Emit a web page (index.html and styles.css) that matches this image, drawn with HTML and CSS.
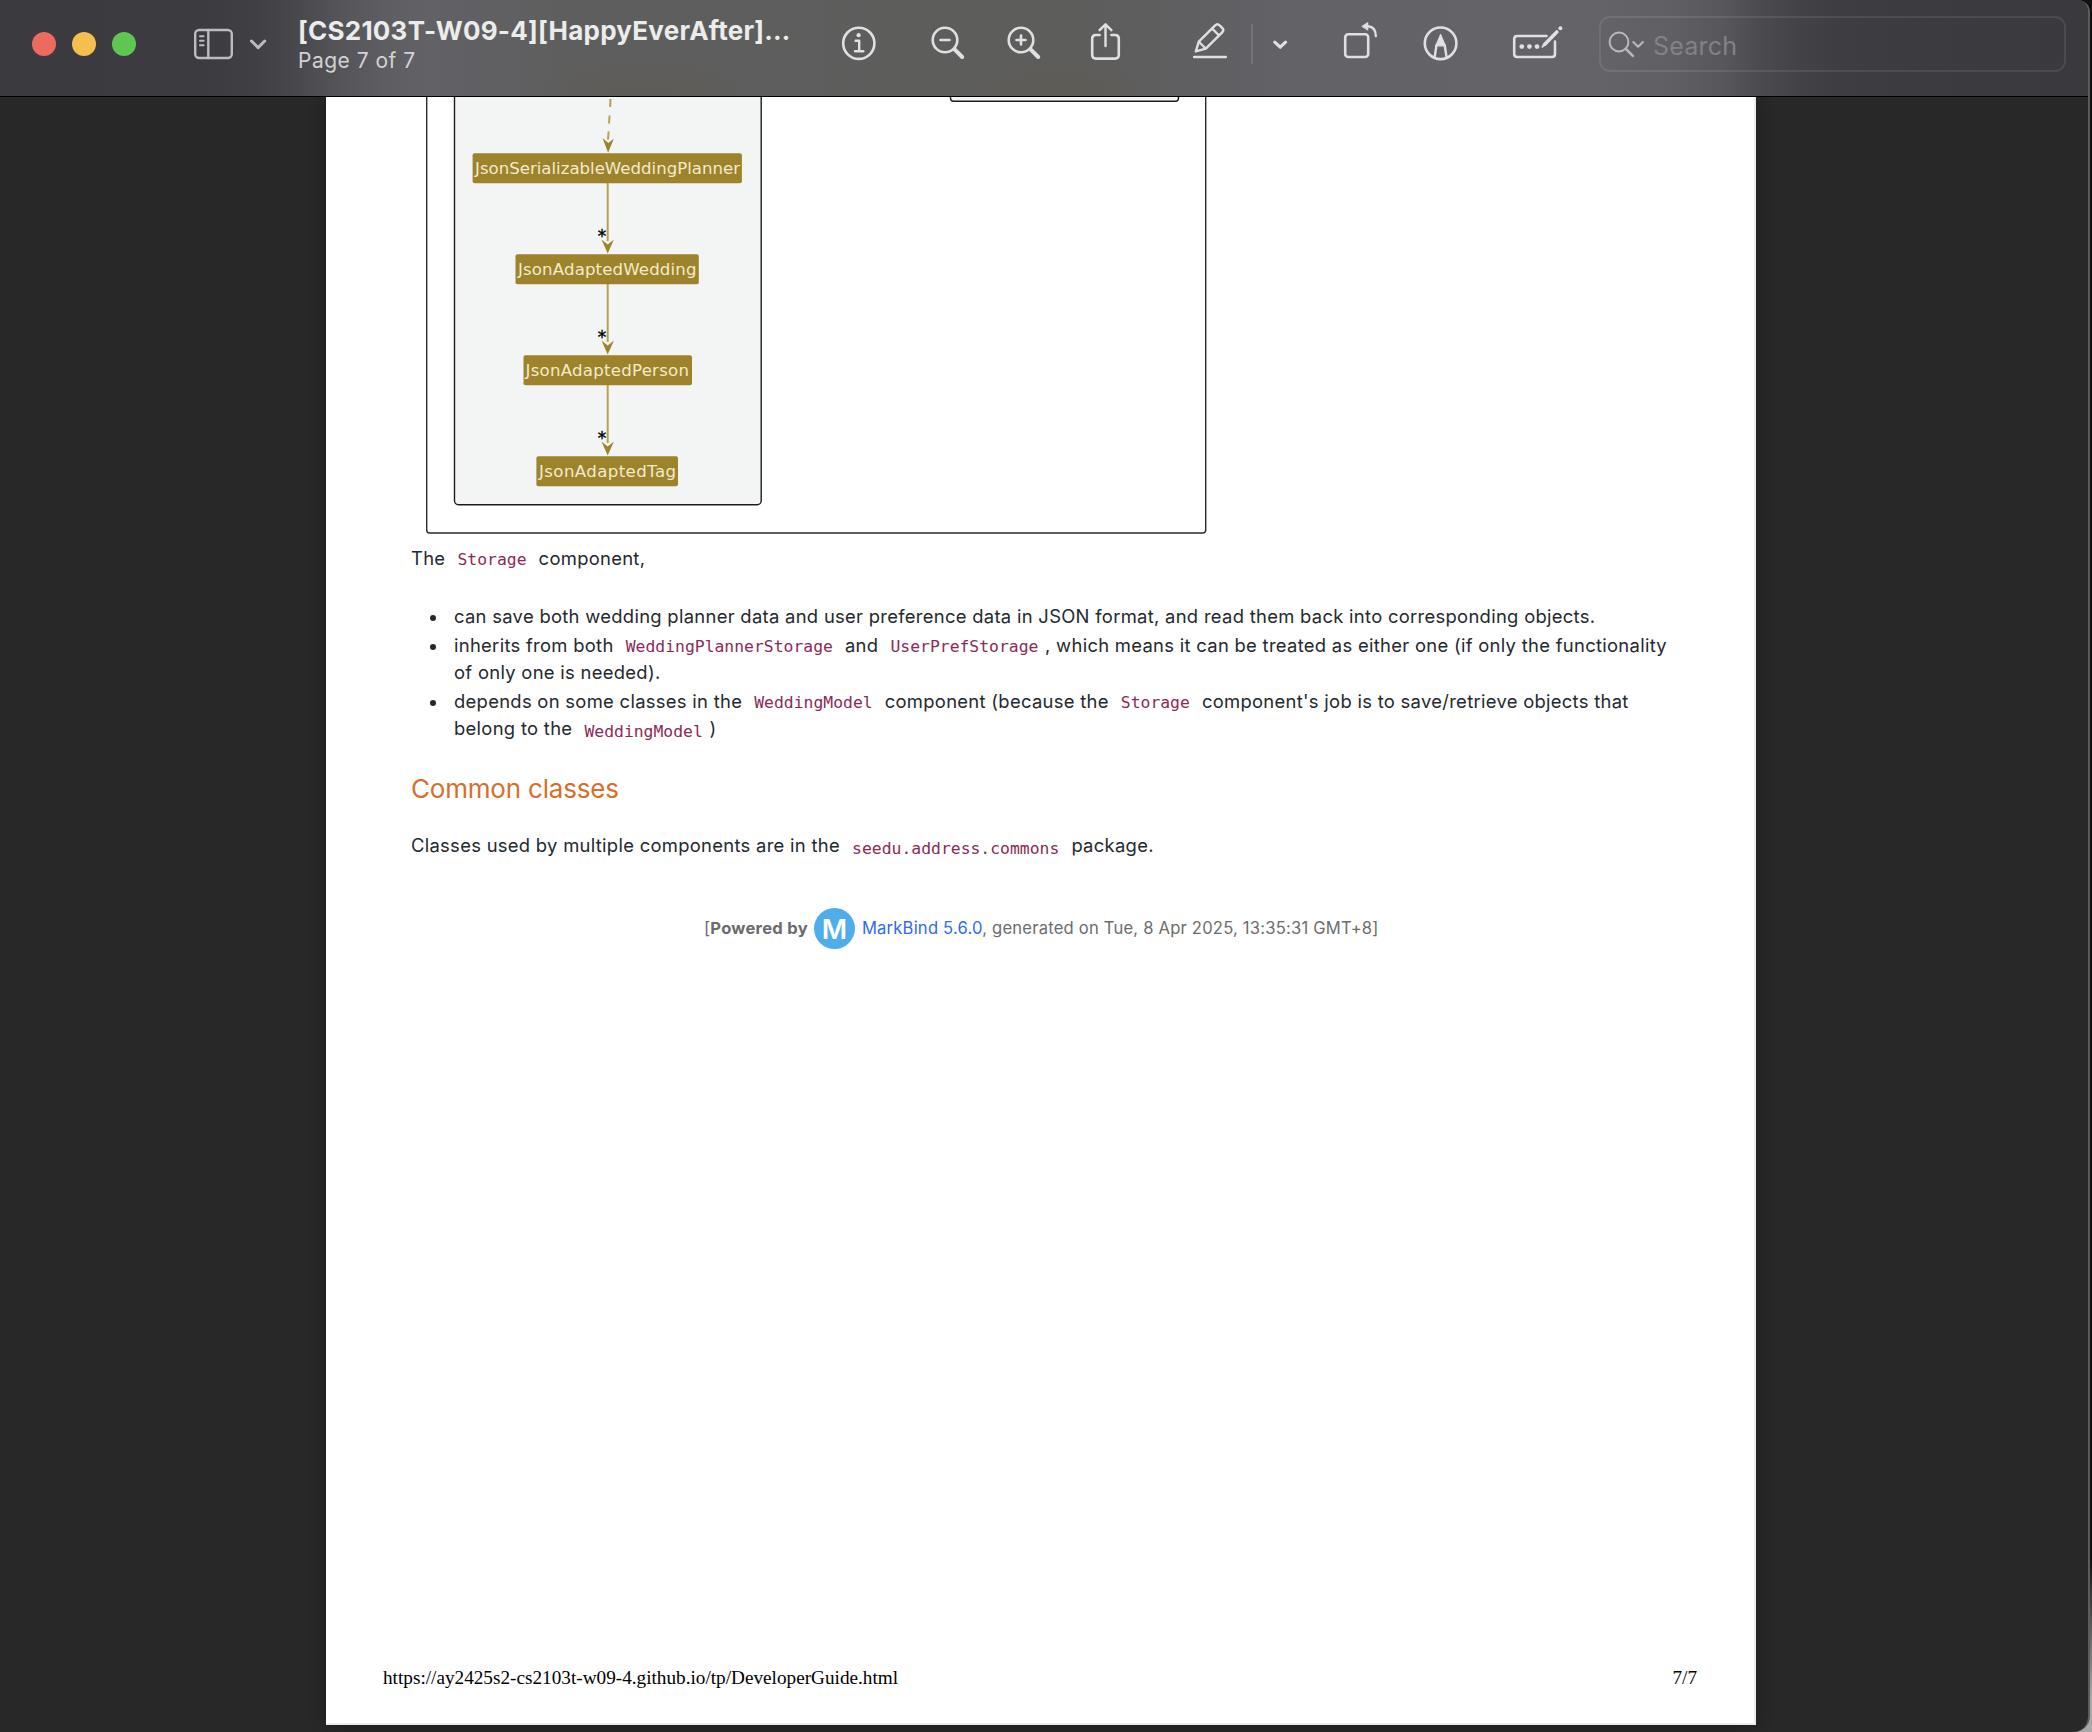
FILE: index.html
```html
<!DOCTYPE html>
<html lang="en">
<head>
<meta charset="utf-8">
<title>Developer Guide</title>
<link rel="stylesheet" href="styles.css">
</head>
<body>
<div class="window">
  <header class="toolbar">
    <div class="lights"><i class="light red"></i><i class="light yellow"></i><i class="light green"></i></div>
    <svg class="sidebar-icon" width="76" height="40" viewBox="192 24 76 40">
      <g fill="none" stroke="#bcbcc0" stroke-width="2.4" stroke-linecap="round" stroke-linejoin="round">
        <rect x="195.2" y="30" width="36.6" height="28" rx="4"/>
        <path d="M208.3 30v28"/>
        <path d="M200 36.3h3.6M200 40.8h3.6M200 45.3h3.6" stroke-width="2"/>
        <path d="M251.5 41l6.6 6.6 6.6-6.6" stroke-width="3"/>
      </g>
    </svg>
    <div class="title">
      <div class="name">[CS2103T-W09-4][HappyEverAfter]…</div>
      <div class="sub">Page 7 of 7</div>
    </div>
    <svg class="tools" width="740" height="60" viewBox="836 14 740 60">
      <g fill="none" stroke="#e0e0e2" stroke-width="2.6" stroke-linecap="round" stroke-linejoin="round">
        <circle cx="858.8" cy="43.3" r="15.6"/>
        <path d="M855.6 40.8h3.6v10.4M855 51.3h8.4" stroke-width="2.4"/>
        <circle cx="858.6" cy="35.2" r="2.1" fill="#e0e0e2" stroke="none"/>

        <circle cx="945" cy="40" r="12.3"/>
        <path d="M940.5 40h9"/>
        <path d="M954.6 49.4l7.6 7.6" stroke-width="4"/>

        <circle cx="1021" cy="40" r="12.3"/>
        <path d="M1016.5 40h9M1021 35.5v9"/>
        <path d="M1030.6 49.4l7.6 7.6" stroke-width="4"/>

        <path d="M1099.6 35h-3.6q-3.8 0-3.8 3.8v16q0 3.8 3.8 3.8h19q3.8 0 3.8-3.8v-16q0-3.8-3.8-3.8h-3.6"/>
        <path d="M1105.5 46V25M1099.6 30.2l5.900-5.900 5.900 5.900" stroke-width="2.4"/>

        <path d="M1195.800 51.400l3-9.700 16.400-16.400q2.200-2.200 4.400 0l2.600 2.600q2.200 2.200 0 4.400l-16.400 16.400-10 2.700z" stroke-width="2.400"/>
        <path d="M1212.200 28.600l6.800 6.800M1199.400 42.200l6 6" stroke-width="2.200"/>
        <path d="M1194.200 57h31.600" stroke-width="2.600"/>
        <path d="M1252 24.500v39" stroke="#77777b" stroke-width="1.800"/>
        <path d="M1274.800 42.200l5.400 5 5.400-5" stroke-width="3.200"/>

        <rect x="1345.200" y="34.200" width="23" height="22.800" rx="3"/>
        <path d="M1362.200 26.200l5.600-3.600v7.200z" fill="#e0e0e2" stroke-width="1"/>
        <path d="M1368 26.200q7.800.6 7.800 9.800" stroke-width="2.400"/>

        <circle cx="1440.600" cy="43.300" r="15.800"/>
        <path d="M1434.600 57.500l1.900-12.300M1446.600 57.500l-1.900-12.300" stroke-width="2.400"/>
        <path d="M1440.600 34.600l4.700 11.200h-9.400z" fill="#e0e0e2" stroke-width="1.200"/>

        <path d="M1546.500 36h-29.300q-3 0-3 3v15q0 3 3 3h34.800q3 0 3-3v-12.500"/>
        <g fill="#e0e0e2" stroke="none"><circle cx="1521.800" cy="46.600" r="2.400"/><circle cx="1529.400" cy="46.600" r="2.400"/><circle cx="1537" cy="46.600" r="2.400"/><circle cx="1560.400" cy="28.200" r="2"/></g>
        <path d="M1544.600 44.400L1556.800 32" stroke-width="3.600"/>
        <path d="M1542.400 46.900l2-3" stroke-width="1.800"/>
      </g>
    </svg>
    <div class="search">
      <svg width="54" height="30" viewBox="1600 28 54 30">
        <g fill="none" stroke="#b9b9bb" stroke-width="2" stroke-linecap="round" stroke-linejoin="round">
          <circle cx="1618" cy="42" r="9.400"/>
          <path d="M1624.800 48.800l7 7" stroke-width="2.600"/>
          <path d="M1632.300 42l4.800 4.800 4.800-4.800"/>
        </g>
      </svg>
      <span>Search</span>
    </div>
  </header>

  <main class="page">
    <svg class="diagram" width="1430" height="448" viewBox="326 97 1430 448">
      <rect x="426.700" y="0" width="779" height="533" rx="3" fill="none" stroke="#2a2a2a" stroke-width="1.400"/>
      <rect x="454.500" y="0" width="306.700" height="504.800" rx="4" fill="#f3f5f5" stroke="#1c1c1c" stroke-width="1.400"/>
      <rect x="950.500" y="60" width="228" height="41.300" rx="3" fill="#f3f5f5" stroke="#1c1c1c" stroke-width="1.400"/>
      <g stroke="#b5a152" stroke-width="2" fill="none">
        <path d="M610.500 99l-.4 8M609.600 115.500l-.6 8M608.600 131.500l-.6 8"/>
        <path d="M607.700 183v58M607.700 284v58M607.700 385v58"/>
      </g>
      <g fill="#9d832b">
        <path d="M602.500 138l5.800 5 5.500-4.200-5.700 14z"/>
        <path d="M601.500 239.500l6.200 5 6.200-5-6.200 14z"/>
        <path d="M601.500 340.500l6.200 5 6.200-5-6.200 14z"/>
        <path d="M601.500 441.500l6.200 5 6.200-5-6.200 14z"/>
        <rect x="472.600" y="153.300" width="269.300" height="30" rx="2"/>
        <rect x="515.500" y="254.200" width="183.300" height="30" rx="2"/>
        <rect x="523.500" y="355.200" width="168.500" height="30" rx="2"/>
        <rect x="536.400" y="456.200" width="141.600" height="30" rx="2"/>
      </g>
      <g class="node">
        <text x="475" y="174" textLength="265">JsonSerializableWeddingPlanner</text>
        <text x="518" y="275" textLength="178.500">JsonAdaptedWedding</text>
        <text x="525.500" y="375.500" textLength="163.500">JsonAdaptedPerson</text>
        <text x="539" y="476.500" textLength="137">JsonAdaptedTag</text>
      </g>
      <g class="mult"><text x="602" y="241.500">*</text><text x="602" y="342.500">*</text><text x="602" y="443.500">*</text></g>
    </svg>

    <article class="content">
      <p>The <code>Storage</code> component,</p>
      <ul>
        <li>can save both wedding planner data and user preference data in JSON format, and read them back into corresponding objects.</li>
        <li>inherits from both <code>WeddingPlannerStorage</code> and <code>UserPrefStorage</code>, which means it can be treated as either one (if only the functionality<br>of only one is needed).</li>
        <li>depends on some classes in the <code>WeddingModel</code> component (because the <code>Storage</code> component's job is to save/retrieve objects that<br>belong to the <code class="low">WeddingModel</code>)</li>
      </ul>
      <h2>Common classes</h2>
      <p>Classes used by multiple components are in the <code class="low">seedu.address.commons</code> package.</p>
    </article>

    <div class="powered">
      <span>[<b>Powered by</b></span>
      <svg width="41" height="41" viewBox="0 0 41 41"><circle cx="20.500" cy="20.500" r="20.500" fill="#4fadea"/><text x="20.500" y="31" text-anchor="middle">M</text></svg>
      <span><a>MarkBind 5.6.0</a>, generated on Tue, 8 Apr 2025, 13:35:31 GMT+8]</span>
    </div>

    <footer class="print-footer"><span>https://ay2425s2-cs2103t-w09-4.github.io/tp/DeveloperGuide.html</span><span>7/7</span></footer>
  </main>
</div>
</body>
</html>
```
FILE: styles.css
```css
* { box-sizing: border-box; }
html, body { margin: 0; height: 100%; overflow: hidden; }
body { background: linear-gradient(#101012 0 90%, #a8a8a8 98%); font-family: Inter, "Liberation Sans", sans-serif; }

.window {
  width: 2090px; height: 1732px; overflow: hidden;
  background: #282828;
  border-right: 2px solid #5c5c5e;
  border-radius: 0 12px 16px 0;
  display: flex; flex-direction: column;
}

.toolbar {
  position: relative; z-index: 1;
  flex: none; height: 97px; border-bottom: 1px solid #000;
  display: flex; align-items: flex-start;
  background:
    radial-gradient(ellipse 110px 40px at 640px 100%, rgba(96, 90, 78, .5), transparent),
    radial-gradient(ellipse 110px 40px at 1060px 100%, rgba(96, 90, 78, .5), transparent),
    linear-gradient(90deg, #3a3a3f 0, #3b3b40 200px, #404044 255px, #48484c 295px, #545459 340px, #5d5d62 385px, #616166 425px, #606063 500px, #5e5e5e 570px, #5d5d5c 1080px, #5f5f61 1180px, #626267 1290px, #636368 1600px, #606064 1670px, #57575b 1725px, #4b4b4f 1760px, #434347 1800px, #3e3e42 1840px, #3b3b40 1910px, #39393e 2090px);
}
.lights { display: flex; gap: 16px; padding: 32px 0 0 32px; width: 192px; }
.light { width: 24px; height: 24px; border-radius: 50%; }
.red { background: #ed6a5e; }
.yellow { background: #f4bf4f; }
.green { background: #61c554; }
.sidebar-icon { margin-top: 24px; }
.title { width: 538px; padding: 15px 0 0 30px; white-space: nowrap; }
.name { font-size: 26px; line-height: 32px; font-weight: 700; letter-spacing: .24px; color: #ececec; }
.sub { font-size: 21px; line-height: 28px; letter-spacing: .5px; color: #d3d3d6; }
.tools { margin: 14px 0 0 30px; flex: none; }
.search {
  margin: 16px 0 0 23px; width: 467px; height: 56px;
  border: 2px solid rgba(255, 255, 255, .09); border-radius: 11px;
  display: flex; align-items: flex-start; padding-top: 10px;
}
.search svg { flex: none; margin-right: -2px; }
.search span { font-size: 25px; line-height: 37px; letter-spacing: .2px; color: #828285; }

.page {
  width: 1430px; height: 1628px; margin-left: 326px; background: #fff;
  border-right: 2px solid #ececec; border-bottom: 2px solid #ececec;
  box-shadow: 0 0 14px rgba(0, 0, 0, .35);
  display: flex; flex-direction: column; overflow: hidden;
}
.diagram { display: block; flex: none; }
.node text { font: 16.6px "DejaVu Sans", sans-serif; fill: #f3ebca; }
.mult text { font: 17px "DejaVu Sans", sans-serif; fill: #000; stroke: #000; stroke-width: .4px; text-anchor: middle; }

.content { padding-left: 85px; font-size: 18.4px; line-height: 27px; letter-spacing: .3px; color: #24292e; white-space: nowrap; }
.content p { margin: 0; }
.content code { font: 16.4px/0 "DejaVu Sans Mono", monospace; letter-spacing: 0; padding: 0 6.6px; color: #8b2a58; position: relative; top: 0; }
.content code.low { top: 2px; }
.content ul { list-style: none; margin: 30.500px 0 0; padding: 0 0 0 43px; }
.content li { margin-bottom: 2px; position: relative; }
.content li::before { content: ""; position: absolute; left: -24px; top: 12px; width: 6px; height: 6px; border-radius: 50%; background: #24292e; }
.content h2 { margin: 32px 0 28px; font-size: 26px; line-height: 30px; font-weight: 400; letter-spacing: -.2px; color: #d5702c; }

.powered { display: flex; align-items: center; height: 41px; margin: 49px 0 0 378px; font-size: 16.6px; letter-spacing: .2px; color: #6c6c6c; white-space: nowrap; }
.powered svg { margin: 0 6.5px; }
.powered b { letter-spacing: .25px; }
.powered svg text { font: 600 27.5px Inter, sans-serif; letter-spacing: 0; fill: #fff; }
.powered a { color: #2f6af0; }

.print-footer { margin-top: auto; display: flex; justify-content: space-between; padding: 0 57px 34px; font: 19.23px/22px "Liberation Serif", serif; color: #000; }
```
